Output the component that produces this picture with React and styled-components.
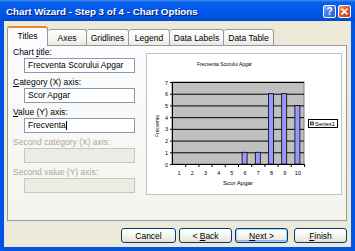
import React from 'react';
import styled, { createGlobalStyle } from 'styled-components';

const Global = createGlobalStyle`
    html, body {
        margin: 0;
        padding: 0;
        background: #ffffff;
    }
    body {
        font-family: "Liberation Sans", Arial, sans-serif;
        font-size: 8.5px;
        color: #000;
    }
`

const Window = styled.div`
    width: 355px;
    height: 251px;
    background: #0054e3;
    display: flex;
    flex-direction: column;
    overflow: hidden;
`

const TitleBar = styled.div`
    height: 21px;
    flex: none;
    display: flex;
    align-items: center;
    padding: 0 4px 0 6px;
    background: linear-gradient(to bottom, #3b8cf5 0%, #0a5fe8 12%, #0058ee 45%, #0054e3 80%, #0048c8 100%);
`

const Caption = styled.div`
    flex: 1;
    color: #fff;
    font-weight: bold;
    font-size: 9.75px;
    white-space: nowrap;
    text-shadow: 1px 1px 0 #0a1e6e;
    margin-top: 1px;
`

const CapButton = styled.div`
    width: 13px;
    height: 13px;
    margin-left: 2px;
    margin-top: 1px;
    border: 1px solid #fff;
    border-radius: 2px;
    box-sizing: border-box;
    display: flex;
    align-items: center;
    justify-content: center;
    color: #fff;
    font-weight: bold;
    font-size: 10px;
    background: ${p => p.$close
        ? 'linear-gradient(135deg, #f0a080 0%, #e2582d 45%, #c8401a 100%)'
        : 'linear-gradient(135deg, #8ab4f8 0%, #3d7be8 45%, #2860d8 100%)'};
`

const Body = styled.div`
    flex: 1;
    margin: 0 4px 4px 4px;
    background: #ece9d8;
    display: flex;
    flex-direction: column;
    padding: 5px 4px 0 3px;
`

const TabRow = styled.div`
    display: flex;
    align-items: flex-end;
    height: 20px;
    position: relative;
    z-index: 1;
`

const Tab = styled.div`
    width: ${p => p.$w}px;
    height: ${p => (p.$active ? 20 : 17)}px;
    box-sizing: border-box;
    border: 1px solid #919b9c;
    border-bottom: ${p => (p.$active ? 'none' : '1px solid #919b9c')};
    border-top: ${p => (p.$active ? '2px solid #e68b2c' : '1px solid #919b9c')};
    border-left: ${p => (p.$first || p.$active ? '1px solid #919b9c' : 'none')};
    border-radius: 3px 3px 0 0;
    background: ${p => (p.$active
        ? '#fcfcfe'
        : 'linear-gradient(to bottom, #ffffff 0%, #f6f5f1 60%, #e9e8e2 100%)')};
    display: flex;
    align-items: center;
    justify-content: center;
    padding-bottom: ${p => (p.$active ? 3 : 0)}px;
    white-space: nowrap;
`

const Panel = styled.div`
    height: 176px;
    box-sizing: border-box;
    margin-top: -1px;
    border: 1px solid #919b9c;
    background: linear-gradient(to bottom, #fcfcfe 0%, #f4f3ee 100%);
    display: flex;
    padding: 1px 0 0 5px;
`

const Fields = styled.div`
    width: 133px;
    display: flex;
    flex-direction: column;
`

const Field = styled.div`
    display: flex;
    flex-direction: column;
    margin-top: ${p => (p.$first ? 0 : 4)}px;
`

const Label = styled.div`
    line-height: 11px;
    height: 11px;
    color: ${p => (p.$disabled ? '#aca899' : '#000')};
    white-space: nowrap;
`

const Input = styled.div`
    margin-left: 11px;
    width: 111px;
    height: 15px;
    box-sizing: border-box;
    border: 1px solid ${p => (p.$disabled ? '#c9c7ba' : '#7f9db9')};
    background: ${p => (p.$disabled ? '#ecebe4' : '#fff')};
    padding: 0 3px;
    line-height: 13px;
    white-space: nowrap;
    display: flex;
    align-items: center;
`

const Caret = styled.span`
    display: inline-block;
    width: 1px;
    height: 9px;
    background: #000;
    margin-left: 0.5px;
`

const Preview = styled.div`
    width: 196px;
    height: 142px;
    box-sizing: border-box;
    margin-top: 6px;
    border: 1px solid #bcc3cb;
    background: #fff;
    flex: none;
`

const Buttons = styled.div`
    display: flex;
    justify-content: flex-end;
    margin-top: 7px;
`

const Button = styled.div`
    width: ${p => p.$w}px;
    height: 15px;
    margin-left: ${p => p.$gap}px;
    box-sizing: border-box;
    border: 1px solid #003c74;
    border-radius: 3px;
    background: linear-gradient(to bottom, #ffffff 0%, #f4f3ee 55%, #e3e0d5 100%);
    box-shadow: ${p => (p.$default ? 'inset 0 0 0 1px #b4cef5, inset 0 -1px 0 1px #8aaee8' : 'none')};
    display: flex;
    align-items: center;
    justify-content: center;
    white-space: pre;
`

const CHART_FONT = '"Liberation Sans", Arial, sans-serif';

const Chart = () => {
    const left = 25, right = 157, top = 28, bottom = 110;
    const unit = (bottom - top) / 7;
    const cat = (right - left) / 10;
    const values = [0, 0, 0, 0, 0, 1, 1, 6, 6, 5];
    return (
        <svg width="194" height="140" viewBox="0 0 194 140" style={{display: 'block'}}>
            <text x="77.5" y="12" fontSize="6" fontFamily={CHART_FONT} textAnchor="middle"
                textLength="55" lengthAdjust="spacingAndGlyphs">Frecventa Scorului Apgar</text>
            <rect x={left} y={top} width={right - left} height={bottom - top} fill="#c0c0c0" stroke="#808080" strokeWidth="1" />
            {[1, 2, 3, 4, 5, 6, 7].map(v => (
                <line key={v} x1={left} x2={right} y1={bottom - v * unit + 0.5} y2={bottom - v * unit + 0.5} stroke="#000" strokeWidth="1" />
            ))}
            {values.map((v, i) => v > 0 && (
                <rect key={i} x={left + cat * (i + 0.5) - 2.5} y={bottom - v * unit} width="5" height={v * unit}
                    fill="#9999ff" stroke="#000" strokeWidth="0.8" />
            ))}
            <line x1={left + 0.5} x2={left + 0.5} y1={top} y2={bottom + 0.5} stroke="#000" />
            <line x1={left} x2={right} y1={bottom + 0.5} y2={bottom + 0.5} stroke="#000" />
            {[0, 1, 2, 3, 4, 5, 6, 7].map(v => (
                <g key={v}>
                    <line x1={left - 2} x2={left} y1={bottom - v * unit + 0.5} y2={bottom - v * unit + 0.5} stroke="#000" />
                    <text x="21" y={bottom - v * unit + 2.5} fontSize="5.5" fontFamily={CHART_FONT} textAnchor="end">{v}</text>
                </g>
            ))}
            {values.map((_, i) => (
                <g key={i}>
                    <line x1={left + cat * (i + 1) + 0.5} x2={left + cat * (i + 1) + 0.5} y1={bottom} y2={bottom + 3} stroke="#000" />
                    <text x={left + cat * (i + 0.5) + 0.5} y="121" fontSize="5.5" fontFamily={CHART_FONT} textAnchor="middle">{i + 1}</text>
                </g>
            ))}
            <text x="91" y="131" fontSize="6" fontFamily={CHART_FONT} textAnchor="middle"
                textLength="30" lengthAdjust="spacingAndGlyphs">Scor Apgar</text>
            <text x="0" y="0" fontSize="6" fontFamily={CHART_FONT} textAnchor="middle"
                textLength="22" lengthAdjust="spacingAndGlyphs"
                transform="translate(12 72) rotate(-90)">Frecventa</text>
            <rect x="161.5" y="65.5" width="29" height="8" fill="#fff" stroke="#000" strokeWidth="1" />
            <rect x="163.5" y="68" width="3" height="3" fill="#9999ff" stroke="#000" strokeWidth="0.6" />
            <text x="168" y="71.5" fontSize="5" fontFamily={CHART_FONT}
                textLength="20" lengthAdjust="spacingAndGlyphs">Series1</text>
        </svg>
    );
};

const tabs = [
    {label: 'Titles', w: 41},
    {label: 'Axes', w: 39},
    {label: 'Gridlines', w: 42},
    {label: 'Legend', w: 41},
    {label: 'Data Labels', w: 54},
    {label: 'Data Table', w: 50},
];

const App = () => {
    return (
        <>
            <Global />
            <Window>
                <TitleBar>
                    <Caption>Chart Wizard - Step 3 of 4 - Chart Options</Caption>
                    <CapButton>?</CapButton>
                    <CapButton $close>
                        <svg width="7" height="7" viewBox="0 0 7 7">
                            <path d="M0.5 0.5 L6.5 6.5 M6.5 0.5 L0.5 6.5" stroke="#fff" strokeWidth="1.6" />
                        </svg>
                    </CapButton>
                </TitleBar>
                <Body>
                    <TabRow>
                        {tabs.map((t, i) => (
                            <Tab key={t.label} $w={t.w} $active={i === 0} $first={i === 0}>{t.label}</Tab>
                        ))}
                    </TabRow>
                    <Panel>
                        <Fields>
                            <Field $first>
                                <Label>Chart <u>t</u>itle:</Label>
                                <Input>Frecventa Scorului Apgar</Input>
                            </Field>
                            <Field>
                                <Label><u>C</u>ategory (X) axis:</Label>
                                <Input>Scor Apgar</Input>
                            </Field>
                            <Field>
                                <Label><u>V</u>alue (Y) axis:</Label>
                                <Input>Frecventa<Caret /></Input>
                            </Field>
                            <Field>
                                <Label $disabled>Second category (X) axis:</Label>
                                <Input $disabled />
                            </Field>
                            <Field>
                                <Label $disabled>Second value (Y) axis:</Label>
                                <Input $disabled />
                            </Field>
                        </Fields>
                        <Preview>
                            <Chart />
                        </Preview>
                    </Panel>
                    <Buttons>
                        <Button $w={55} $gap={0}>Cancel</Button>
                        <Button $w={53} $gap={3}>{'< '}<u>B</u>ack</Button>
                        <Button $w={53} $gap={3} $default><u>N</u>{'ext >'}</Button>
                        <Button $w={53} $gap={6}><u>F</u>inish</Button>
                    </Buttons>
                </Body>
            </Window>
        </>
    );
};

export default App;
